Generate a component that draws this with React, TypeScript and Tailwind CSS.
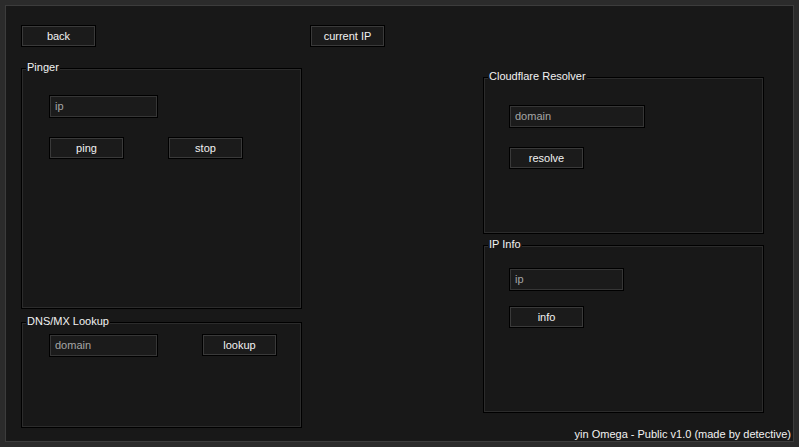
const font = { fontFamily: '"Liberation Sans", Arial, sans-serif' };

function Btn({ label, className = "" }: { label: string; className?: string }) {
  return (
    <button
      type="button"
      className={`flex h-[22px] w-[75px] items-center justify-center border border-black bg-[#1b1b1b] text-[11px] leading-none text-[#f2f2f2] shadow-[inset_0_0_0_1px_#3a3a3a] ${className}`}
    >
      {label}
    </button>
  );
}

function Field({ placeholder, width }: { placeholder: string; width: string }) {
  return (
    <div
      className={`flex h-[23px] items-center border border-black bg-[#1b1b1b] pl-[5px] text-[11px] leading-none text-[#a6a6a6] shadow-[inset_0_0_0_1px_#363636] ${width}`}
    >
      {placeholder}
    </div>
  );
}

function Group({
  title,
  className = "",
  children,
}: {
  title: string;
  className?: string;
  children?: React.ReactNode;
}) {
  return (
    <div
      className={`relative w-[281px] border border-black shadow-[inset_0_0_0_1px_#2c2c2c] ${className}`}
    >
      <span className="absolute -top-[8px] left-[4px] bg-[#181818] px-[1px] text-[11px] leading-[13px] text-[#f2f2f2]">
        {title}
      </span>
      {children}
    </div>
  );
}

export default function App() {
  return (
    <div className="h-[447px] w-[799px] bg-[#2b2b2b] p-[5px]" style={font}>
      <div className="flex h-full flex-col border border-[#3c3c3c] bg-[#181818]">
        <div className="mx-[1px] h-[2px] bg-[#6b12c8]" />

        <div className="flex flex-1 pl-[15px] pt-[19px]">
          {/* left column */}
          <div className="flex flex-col">
            <Btn label="back" />

            <Group title="Pinger" className="mt-[21px] h-[241px]">
              <div className="flex flex-col pl-[27px] pt-[26px]">
                <Field placeholder="ip" width="w-[109px]" />
                <div className="mt-[19px] flex gap-[44px]">
                  <Btn label="ping" />
                  <Btn label="stop" />
                </div>
              </div>
            </Group>

            <Group title="DNS/MX Lookup" className="mt-[13px] h-[106px]">
              <div className="flex pl-[27px] pt-[11px]">
                <Field placeholder="domain" width="w-[109px]" />
                <Btn label="lookup" className="ml-[44px]" />
              </div>
            </Group>
          </div>

          {/* middle */}
          <div className="ml-[8px]">
            <Btn label="current IP" />
          </div>

          {/* right column */}
          <div className="ml-[98px] mt-[52px] flex flex-col">
            <Group title="Cloudflare Resolver" className="h-[157px]">
              <div className="flex flex-col items-start pl-[25px] pt-[27px]">
                <Field placeholder="domain" width="w-[136px]" />
                <Btn label="resolve" className="mt-[19px]" />
              </div>
            </Group>

            <Group title="IP Info" className="mt-[11px] h-[168px]">
              <div className="flex flex-col items-start pl-[25px] pt-[22px]">
                <Field placeholder="ip" width="w-[115px]" />
                <Btn label="info" className="mt-[15px]" />
              </div>
            </Group>
          </div>
        </div>

        <div className="pb-[2px] pr-[2px] text-right text-[11px] leading-[13px] text-[#f2f2f2]">
          yin Omega - Public v1.0 (made by detective)
        </div>
      </div>
    </div>
  );
}
